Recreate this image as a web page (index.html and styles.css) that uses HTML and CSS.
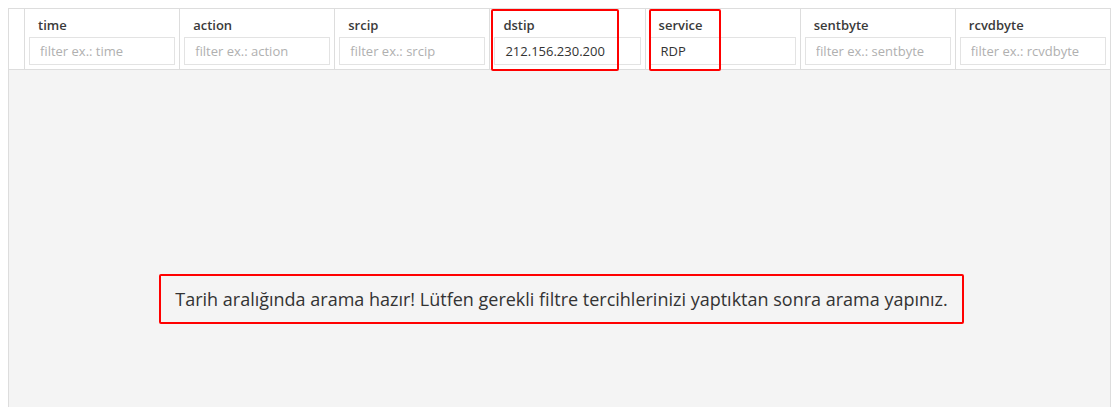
FILE: index.html
```html
<!DOCTYPE html>
<html lang="tr">
<head>
    <meta charset="UTF-8">
    <title>Log arama</title>
    <link rel="stylesheet" href="styles.css">
</head>
<body>
    <div class="grid">
        <div class="grid-head">
            <div class="cell cell-check"></div>
            <div class="cell">
                <div class="label">time</div>
                <input type="text" placeholder="filter ex.: time">
            </div>
            <div class="cell">
                <div class="label">action</div>
                <input type="text" placeholder="filter ex.: action">
            </div>
            <div class="cell">
                <div class="label">srcip</div>
                <input type="text" placeholder="filter ex.: srcip">
            </div>
            <div class="cell">
                <div class="label">dstip</div>
                <input type="text" placeholder="filter ex.: dstip" value="212.156.230.200">
                <span class="mark mark-dstip"></span>
            </div>
            <div class="cell">
                <div class="label">service</div>
                <input type="text" placeholder="filter ex.: service" value="RDP">
                <span class="mark mark-service"></span>
            </div>
            <div class="cell">
                <div class="label">sentbyte</div>
                <input type="text" placeholder="filter ex.: sentbyte">
            </div>
            <div class="cell">
                <div class="label">rcvdbyte</div>
                <input type="text" placeholder="filter ex.: rcvdbyte">
            </div>
        </div>
        <div class="grid-body">
            <div class="message">Tarih aralığında arama hazır! Lütfen gerekli filtre tercihlerinizi yaptıktan sonra arama yapınız.</div>
        </div>
    </div>
</body>
</html>
```

FILE: styles.css
```css
body {
    margin: 8px 7px 0 8px;
    font-family: "Open Sans", sans-serif;
    color: #333;
    background-color: #fff;
}
.grid {
    border: 1px solid #ddd;
    border-bottom: none;
}
.grid-head {
    display: flex;
    border-bottom: 1px solid #ddd;
    background-color: #fff;
}
.cell {
    position: relative;
    flex: 1;
    padding: 4px 4px 4px 4px;
    border-left: 1px solid #ddd;
    min-width: 0;
}
.cell-check {
    flex: 0 0 15px;
    padding: 0;
    border-left: none;
}
.label {
    font-size: 13px;
    font-weight: 600;
    line-height: 24px;
    padding-left: 9px;
    color: #3a3a3a;
}
.cell input {
    display: block;
    box-sizing: border-box;
    width: 100%;
    height: 28px;
    border: 1px solid #e3e3e3;
    padding: 0 10px;
    font-family: "Open Sans", sans-serif;
    font-size: 13px;
    color: #333;
    outline: none;
}
.cell input::placeholder {
    color: #b0b0b0;
}
.mark {
    position: absolute;
    top: 0;
    left: 1px;
    height: 58px;
    border: 2px solid #f00;
    border-radius: 2px;
}
.mark-dstip {
    width: 124px;
}
.mark-service {
    left: 3px;
    width: 68px;
}
.grid-body {
    background-color: #f4f4f4;
    height: 400px;
    padding: 204px 0 0 4px;
    text-align: center;
    box-sizing: border-box;
}
.message {
    display: inline-block;
    border: 2px solid #f00;
    border-radius: 2px;
    padding: 11px 14px;
    font-size: 18px;
    line-height: 24px;
    color: #333;
}
```
